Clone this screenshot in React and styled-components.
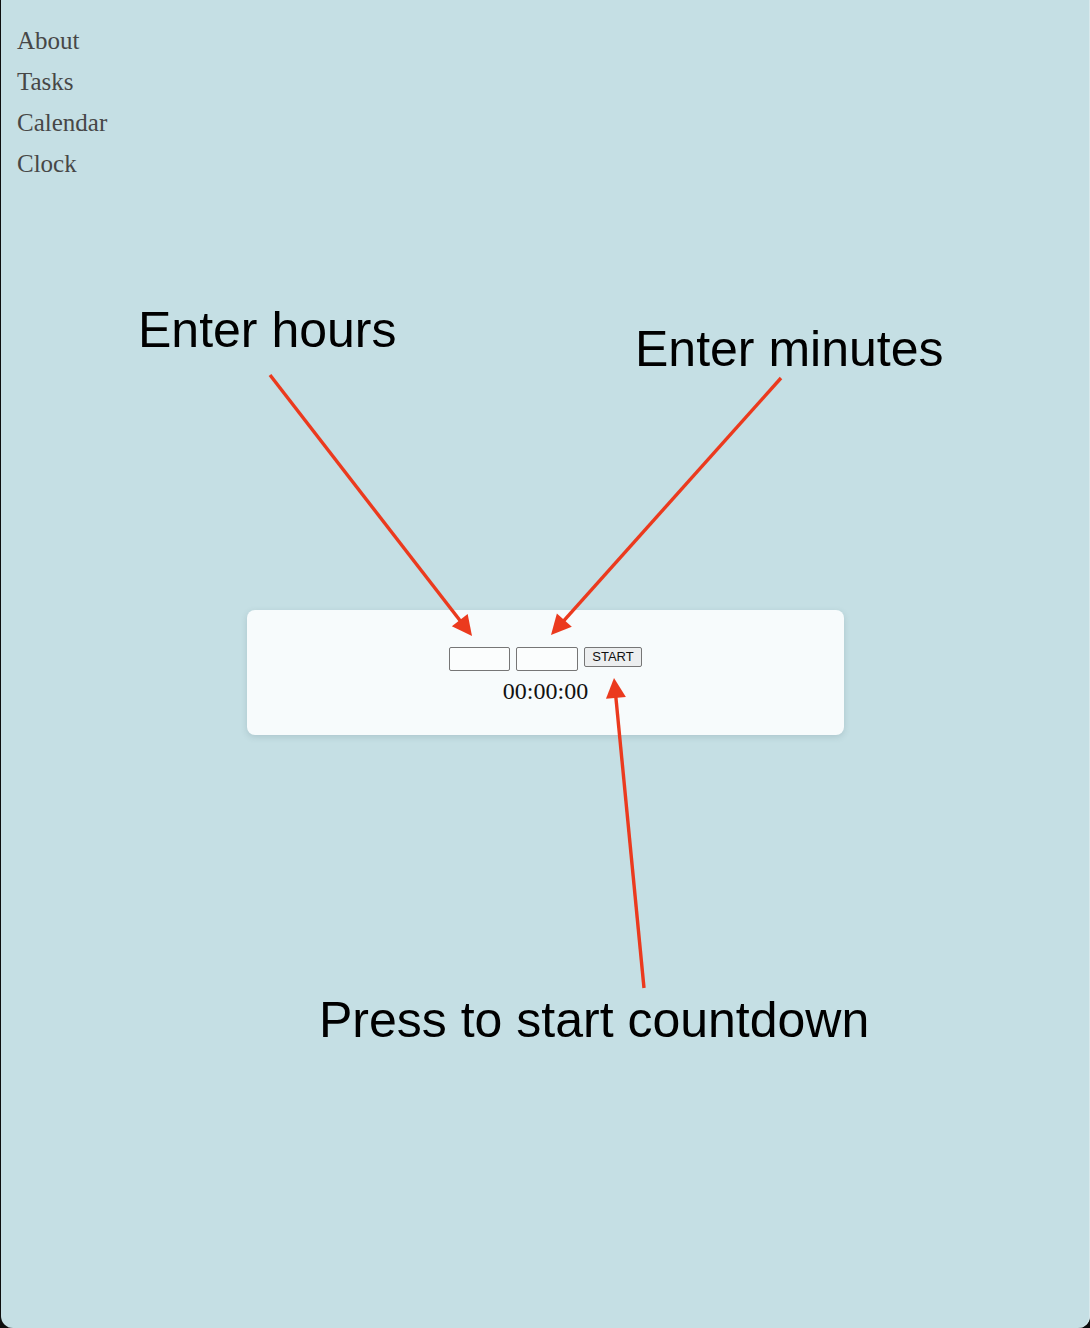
import React, { useState } from 'react';
import styled, { createGlobalStyle } from 'styled-components';

const GlobalStyle = createGlobalStyle`
  html, body {
    margin: 0;
    padding: 0;
    background: #0e0e0e;
  }
`;

const Frame = styled.div`
  position: relative;
  margin-left: 1px;
  width: 1089px;
  height: 1328px;
  box-sizing: border-box;
  background-color: #c5dfe4;
  border-radius: 0 0 12px 12px;
  box-shadow: inset -1px 0 0 #d9e9ec;
  overflow: hidden;
`;

const Nav = styled.nav`
  display: flex;
  flex-direction: column;
  padding: 20px 0 0 16px;
`;

const NavLink = styled.a`
  font-family: "Liberation Serif", "Times New Roman", serif;
  font-size: 25px;
  line-height: 41px;
  color: #474747;
  text-decoration: none;
  cursor: pointer;
`;

const Main = styled.main`
  display: flex;
  justify-content: center;
  padding-top: 426px;
`;

const Card = styled.div`
  width: 597px;
  box-sizing: border-box;
  padding: 37px 0 30px;
  display: flex;
  flex-direction: column;
  align-items: center;
  background-color: #f7fbfc;
  border-radius: 8px;
  box-shadow: 0 2px 6px rgba(60, 90, 100, 0.18);
`;

const Controls = styled.div`
  display: flex;
  align-items: flex-start;
  gap: 6px;
`;

const TimeInput = styled.input`
  width: ${(p) => p.$w}px;
  height: 24px;
  box-sizing: border-box;
  padding: 0 4px;
  border: 1px solid #767676;
  border-radius: 2px;
  background: #fbfdfd;
  font-family: "Liberation Sans", Arial, sans-serif;
  font-size: 13px;
`;

const StartButton = styled.button`
  width: 58px;
  height: 20px;
  box-sizing: border-box;
  padding: 0;
  border: 1px solid #767676;
  border-radius: 2px;
  background: #eceeef;
  color: #111;
  font-family: "Liberation Sans", Arial, sans-serif;
  font-size: 13px;
  line-height: 18px;
  cursor: pointer;
`;

const Timer = styled.div`
  margin-top: 7px;
  font-family: "Liberation Serif", "Times New Roman", serif;
  font-size: 24px;
  color: #111;
`;

const Label = styled.div`
  position: absolute;
  left: ${(p) => p.$x}px;
  top: ${(p) => p.$y}px;
  font-family: "Liberation Sans", Arial, sans-serif;
  font-size: 50px;
  line-height: 1;
  color: #000;
  white-space: nowrap;
  pointer-events: none;
`;

const ArrowLayer = styled.svg`
  position: absolute;
  left: 0;
  top: 0;
  pointer-events: none;
`;

const RED = '#eb3a1e';

function Arrow({ from, to, head = 20, half = 10 }) {
  const dx = to[0] - from[0];
  const dy = to[1] - from[1];
  const len = Math.hypot(dx, dy);
  const ux = dx / len;
  const uy = dy / len;
  const bx = to[0] - ux * head;
  const by = to[1] - uy * head;
  const px = -uy * half;
  const py = ux * half;
  const pts = `${to[0]},${to[1]} ${bx + px},${by + py} ${bx - px},${by - py}`;
  return (
    <g>
      <line x1={from[0]} y1={from[1]} x2={bx + ux * 2} y2={by + uy * 2} stroke={RED} strokeWidth="3.4" />
      <polygon points={pts} fill={RED} />
    </g>
  );
}

export default function App() {
  const [hours, setHours] = useState('');
  const [minutes, setMinutes] = useState('');

  return (
    <>
      <GlobalStyle />
      <Frame>
        <Nav>
          <NavLink>About</NavLink>
          <NavLink>Tasks</NavLink>
          <NavLink>Calendar</NavLink>
          <NavLink>Clock</NavLink>
        </Nav>

        <Main>
          <Card>
            <Controls>
              <TimeInput $w={61} value={hours} onChange={(e) => setHours(e.target.value)} />
              <TimeInput $w={62} value={minutes} onChange={(e) => setMinutes(e.target.value)} />
              <StartButton>START</StartButton>
            </Controls>
            <Timer>00:00:00</Timer>
          </Card>
        </Main>

        {/* annotations drawn over the page */}
        <Label $x={137} $y={305}>Enter hours</Label>
        <Label $x={634} $y={324}>Enter minutes</Label>
        <Label $x={318} $y={995}>Press to start countdown</Label>
        <ArrowLayer width="1089" height="1328">
          <Arrow from={[269, 375]} to={[471, 636]} head={20} half={10} />
          <Arrow from={[780, 378]} to={[550, 635]} head={20} half={10} />
          <Arrow from={[643, 988]} to={[613, 678]} head={20} half={10} />
        </ArrowLayer>
      </Frame>
    </>
  );
}
